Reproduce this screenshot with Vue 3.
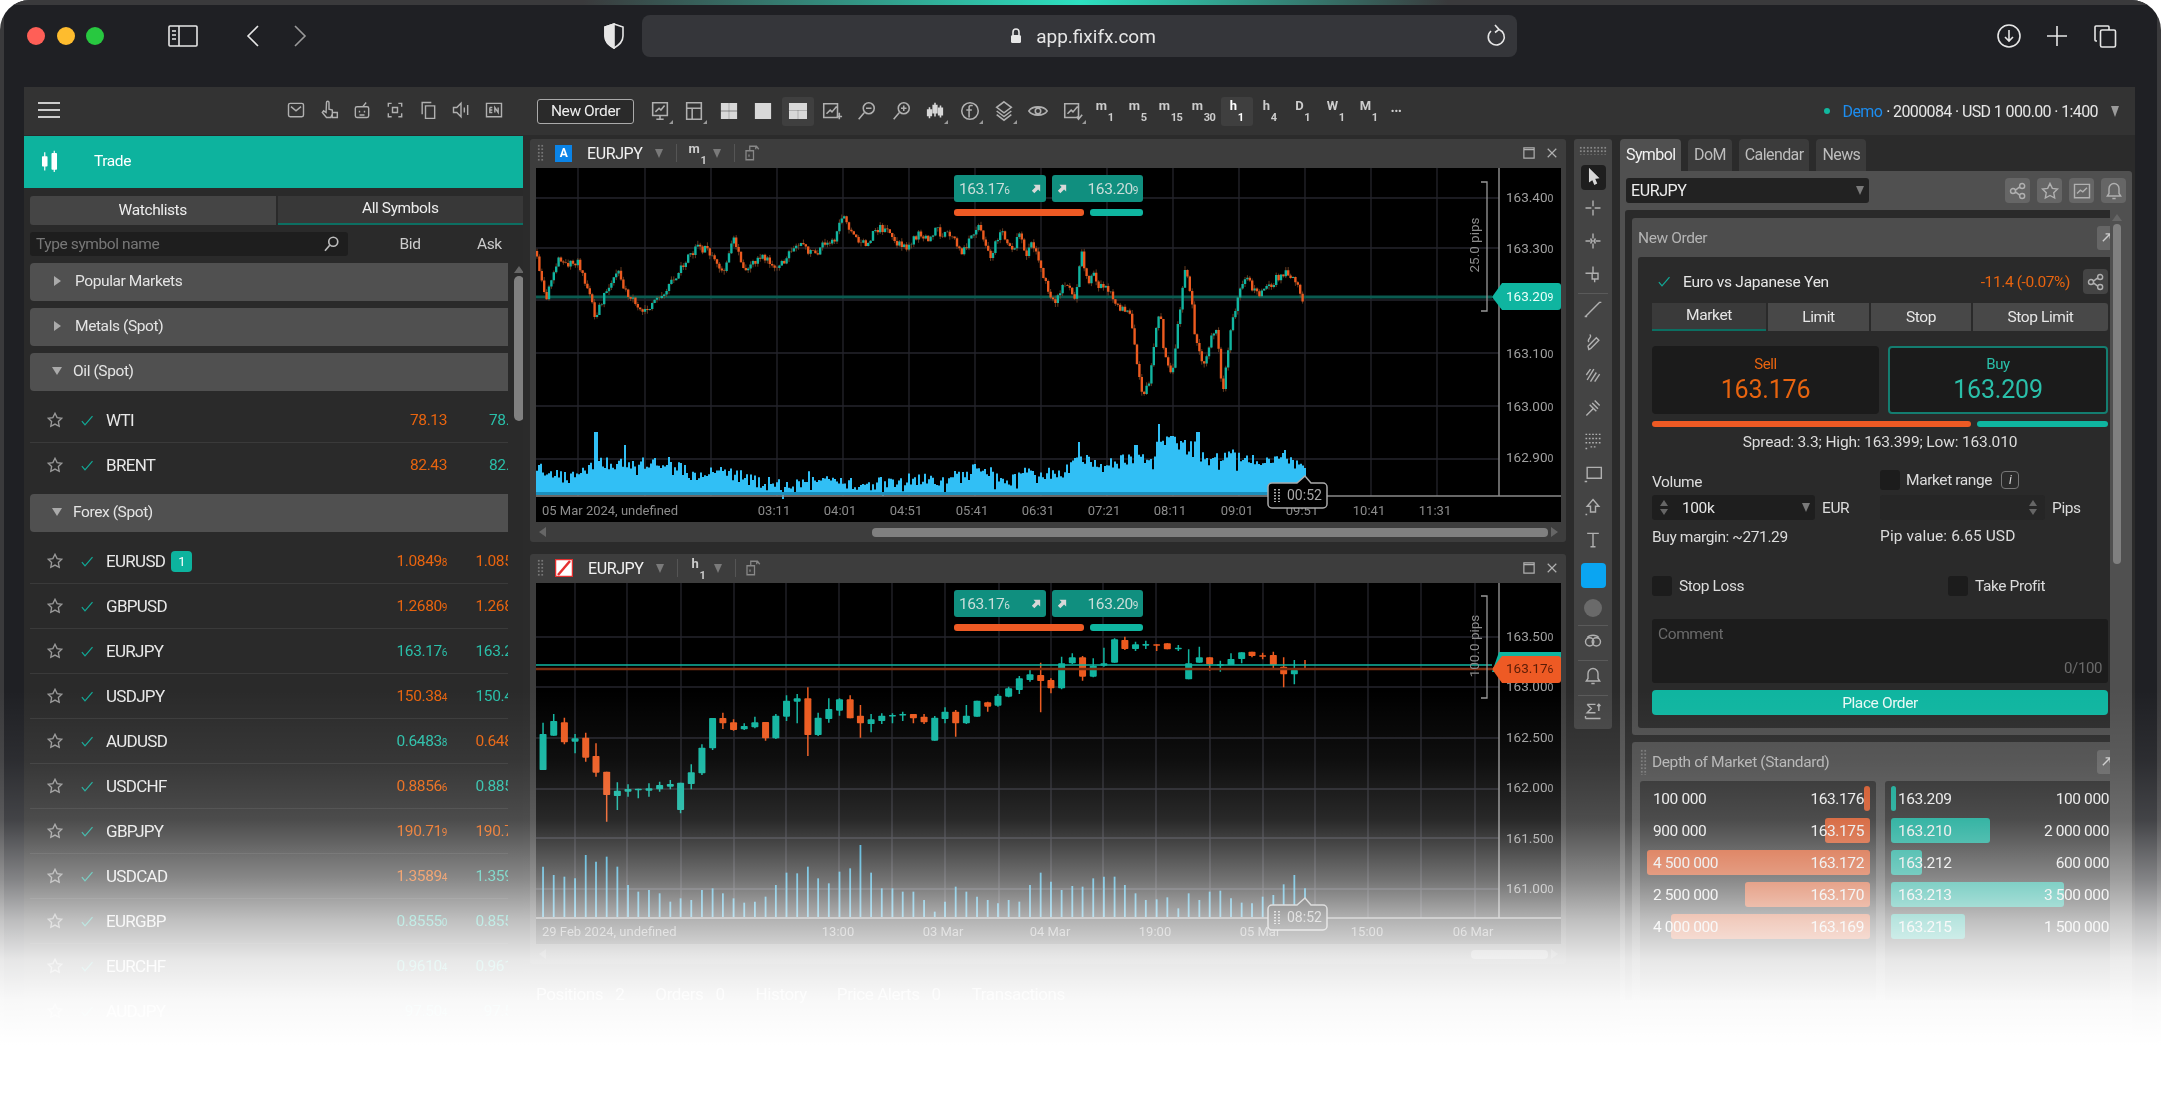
<script setup>
const icons = {
  mail: 'M5 4h14a2 2 0 0 1 2 2v12a2 2 0 0 1-2 2H5a2 2 0 0 1-2-2V6a2 2 0 0 1 2-2zM6 8l6 5 6-5',
  hand: 'M9 3a1.5 1.5 0 0 1 3 0v8l4 1v5l-2 4H9l-5-6 1.500-2 3 2zM16 15h6v6h-6z',
  robot: 'M6 8h12a2 2 0 0 1 2 2v9a2 2 0 0 1-2 2H6a2 2 0 0 1-2-2v-9a2 2 0 0 1 2-2zM9 13v2M15 13v2M9 18h6M13 8l4-5',
  focus: 'M4 8V4h4M16 4h4v4M20 16v4h-4M8 20H4v-4M9 9h6v6H9z',
  copy: 'M9 7h11v15H9zM5 17V3h11',
  sound: 'M3 9h4l5-5v16l-5-5H3zM16 9v6M20 6v12',
  lang: 'M3 4h18v16H3zM7 9v6h3M7 12h3M7 9h3M13 15V9l4 6V9',
  monitor: 'M4 3h16v14H4zM12 17v4M8 21h8M7 13l4-4 2 2 4-5',
  layout: 'M4 3h16v18H4zM4 9h16M10 9v12',
  grid: 'M4 4h7v7H4zM13 4h7v7h-7zM4 13h7v7H4zM13 13h7v7h-7z',
  square: 'M4 4h16v16H4z',
  split: 'M3 4h18v6H3zM3 12h8v8H3zM13 12h8v8h-8z',
  chartplus: 'M3 4h15v15H3zM6 15l4-4 2 2 5-6M20 14v7M17 18h6',
  zoomout: 'M15 3a6 6 0 1 0 0 12 6 6 0 0 0 0-12zM10 14l-6 7M12 9h6',
  zoomin: 'M15 3a6 6 0 1 0 0 12 6 6 0 0 0 0-12zM10 14l-6 7M12 9h6M15 6v6',
  candles: 'M6 8v12M4 11h4v6H4zM12 3v15M10 6h4v8h-4zM18 6v13M16 9h4v7h-4z',
  fcircle: 'M12 3a9 9 0 1 0 0 18 9 9 0 0 0 0-18zM15 6h-2a2 2 0 0 0-2 2v11M8 11h6',
  layers: 'M12 2l8 6-8 6-8-6zM4 12l8 6 8-6M4 16l8 6 8-6',
  eye: 'M2 12c4-6 16-6 20 0-4 6-16 6-20 0zM12 9a3 3 0 1 0 0 6 3 3 0 0 0 0-6z',
  chartcheck: 'M3 4h15v15H3zM6 15l4-4 2 2 5-6M16 18l2 3 4-5',
  cursor: 'M8 3l10 10-4.500.5 2.500 6-2 1-2.500-6L8 17z',
  cross: 'M12 3v7M12 14v7M3 12h7M14 12h7',
  crossb: 'M12 3v6M12 15v6M3 12h6M15 12h6M9 9l2 3-2 3M15 9l-2 3 2 3',
  crossq: 'M12 3v8M3 11h8M11 11h7v7h-7zM14 18v4',
  line: 'M3 21L20 4M2 21h3M19 4h3',
  scribble: 'M8 3c4 3-4 6-1 9M9 20l10-10-3-3L6 17l1 4z',
  hatch: 'M5 18L13 5M9 20l7-11M14 20l6-9M4 12l5-7',
  fork: 'M4 21l8-8M8 8l8 8M11 6l7 7M14 3l6 6',
  dots: 'M3 4h18M3 9h18M3 14h18M9 19h8M3 21h3',
  rect: 'M5 4h17v13H5zM2 21h3',
  arrowup: 'M12 3l7 8h-4v7H9v-7H5zM3 21h2',
  text: 'M5 4h14M12 4v16M9 20h6',
  glasses: 'M3 13a5 5 0 1 0 10 0 5 5 0 0 0-10 0zM11 13a5 5 0 1 0 10 0 5 5 0 0 0-10 0zM5 8c3-4 11-4 14 0',
  bell: 'M12 3a6 6 0 0 0-6 6v6l-2 3h16l-2-3V9a6 6 0 0 0-6-6zM10 21h4',
  bars: 'M5 4h10M5 4l5 5-5 5h10M3 21h18M3 21v-3M19 4v8M17 6l2-2 2 2',
  share: 'M17 3a3 3 0 1 0 0 6 3 3 0 0 0 0-6zM6 9a3 3 0 1 0 0 6 3 3 0 0 0 0-6zM17 15a3 3 0 1 0 0 6 3 3 0 0 0 0-6zM9 11l5-4M9 13l5 4',
  star: 'M12 3l2.800 5.800 6.200.9-4.500 4.400 1.100 6.300L12 17.400l-5.600 3 1.100-6.300L3 9.700l6.200-.9z',
  chartbox: 'M3 4h18v16H3zM6 15l4-4 3 2 5-5',
  check: 'M3 13l5 6L20 5',
  popout: 'M4 9h10v12H4zM9 9V3h8v4M13 3l5 0 3 4M8 14v3',
  magnifier: 'M15 3a6 6 0 1 0 0 12 6 6 0 0 0 0-12zM10 14l-6 7',
}

const headIcons = ['mail', 'hand', 'robot', 'focus', 'copy', 'sound', 'lang']
const topIcons = [
  { name: 'monitor', mark: true }, { name: 'layout', mark: true }, { name: 'grid', fill: true }, { name: 'square', fill: true },
  { name: 'split', fill: true, on: true }, { name: 'chartplus' }, { name: 'zoomout' }, { name: 'zoomin' },
  { name: 'candles', fill: true, mark: true }, { name: 'fcircle', mark: true }, { name: 'layers', mark: true }, { name: 'eye' }, { name: 'chartcheck', mark: true },
]
const timeframes = [
  ['m', '1'], ['m', '5'], ['m', '15'], ['m', '30'], ['h', '1', true], ['h', '4'], ['D', '1'], ['W', '1'], ['M', '1'],
]
const tools = [
  { i: 'cursor', on: true }, { i: 'cross' }, { i: 'crossb' }, { i: 'crossq' }, { sep: true },
  { i: 'line' }, { i: 'scribble' }, { i: 'hatch' }, { i: 'fork' }, { i: 'dots' }, { i: 'rect' }, { i: 'arrowup' }, { i: 'text' },
  { swatch: true }, { dot: true }, { sep: true }, { i: 'glasses' }, { sep: true }, { i: 'bell' }, { sep: true }, { i: 'bars' },
]

const split = (v) => ({ main: v.slice(0, -1), last: v.slice(-1) })
const groups = [
  { name: 'Popular Markets' },
  { name: 'Metals (Spot)' },
  {
    name: 'Oil (Spot)', open: true, rows: [
      { s: 'WTI', bid: '78.13', ask: '78.16', bc: 'dn', ac: 'up', plain: true },
      { s: 'BRENT', bid: '82.43', ask: '82.46', bc: 'dn', ac: 'up', plain: true },
    ],
  },
  {
    name: 'Forex (Spot)', open: true, rows: [
      { s: 'EURUSD', bid: '1.08498', ask: '1.08512', bc: 'dn', ac: 'dn', badge: '1' },
      { s: 'GBPUSD', bid: '1.26809', ask: '1.26824', bc: 'dn', ac: 'dn' },
      { s: 'EURJPY', bid: '163.176', ask: '163.209', bc: 'up', ac: 'up' },
      { s: 'USDJPY', bid: '150.384', ask: '150.412', bc: 'dn', ac: 'up' },
      { s: 'AUDUSD', bid: '0.64838', ask: '0.64852', bc: 'up', ac: 'dn' },
      { s: 'USDCHF', bid: '0.88566', ask: '0.88584', bc: 'dn', ac: 'up' },
      { s: 'GBPJPY', bid: '190.719', ask: '190.761', bc: 'dn', ac: 'dn' },
      { s: 'USDCAD', bid: '1.35894', ask: '1.35917', bc: 'dn', ac: 'up' },
      { s: 'EURGBP', bid: '0.85550', ask: '0.85566', bc: 'up', ac: 'up' },
      { s: 'EURCHF', bid: '0.96104', ask: '0.96128', bc: 'up', ac: 'up' },
      { s: 'AUDJPY', bid: '97.504', ask: '97.533', bc: 'up', ac: 'up' },
    ],
  },
]

const bidRows = [
  { v: '100 000', p: '163.176', w: 6 }, { v: '900 000', p: '163.175', w: 45 },
  { v: '4 500 000', p: '163.172', w: 223 }, { v: '2 500 000', p: '163.170', w: 125 },
  { v: '4 000 000', p: '163.169', w: 199 },
]
const askRows = [
  { v: '100 000', p: '163.209', w: 5 }, { v: '2 000 000', p: '163.210', w: 99 },
  { v: '600 000', p: '163.212', w: 31 }, { v: '3 500 000', p: '163.213', w: 173 },
  { v: '1 500 000', p: '163.215', w: 74 },
]

// chart data, in page pixels; the svg viewBox uses the same numbers
const random = (seed) => () => {
  seed = (seed + 0x6d2b79f5) | 0
  let t = Math.imul(seed ^ (seed >>> 15), 1 | seed)
  t = (t + Math.imul(t ^ (t >>> 7), 61 | t)) ^ t
  return ((t ^ (t >>> 14)) >>> 0) / 4294967296
}
const interp = (pts, x) => {
  for (let i = 1; i < pts.length; i++) {
    if (x <= pts[i][0]) {
      const k = (x - pts[i - 1][0]) / (pts[i][0] - pts[i - 1][0] || 1)
      return pts[i - 1][1] + (pts[i][1] - pts[i - 1][1]) * k
    }
  }
  return pts[pts.length - 1][1]
}
const left = (list) => list.map(([x, y]) => [530 + x / 2.53, 130 + y / 3])
const right = (list) => list.map(([x, y]) => [1150 + x / 3, 130 + y / 3])

const pricePts = [
  ...left([[18, 380], [40, 510], [75, 385], [125, 400], [165, 560], [220, 420], [290, 560], [370, 460], [430, 320], [490, 450],
    [515, 345], [540, 425], [590, 385], [620, 440], [690, 350], [720, 375], [795, 280], [850, 340], [885, 300], [945, 370],
    [1030, 285], [1090, 360], [1135, 300], [1165, 390], [1190, 300], [1220, 360], [1235, 320], [1255, 400], [1270, 350],
    [1330, 520], [1360, 470], [1380, 510], [1395, 380], [1410, 460], [1425, 420], [1490, 520], [1515, 530], [1550, 810]]),
  ...right([[0, 770], [30, 540], [40, 650], [65, 740], [105, 410], [125, 480], [135, 610], [160, 680], [190, 590], [200, 600],
    [218, 770], [245, 570], [285, 440], [330, 500], [380, 440], [410, 420], [440, 480], [465, 560]]),
]
const volPts = [
  ...left([[0, 1010], [100, 1040], [165, 1000], [230, 1000], [350, 1000], [420, 1040], [480, 1020], [560, 1050], [660, 1075],
    [700, 1040], [840, 1070], [960, 1045], [1050, 1055], [1130, 1010], [1210, 1060], [1260, 1010], [1340, 1040], [1390, 985],
    [1450, 1010], [1530, 980]]),
  ...right([[0, 1000], [25, 930], [80, 940], [130, 950], [170, 1000], [220, 970], [300, 990], [400, 975], [465, 1030]]),
]

const buildTicks = () => {
  const rnd = random(11)
  let up = ''
  let down = ''
  let wick = ''
  let prev = interp(pricePts, 536)
  let wobble = 0
  let target = 0
  for (let i = 0, x = 537; x < 1305; x += 2.4, i++) {
    // a short swing every few ticks, so the line is jagged and not smooth
    if (i % 5 === 0) target = (rnd() - 0.5) * 16
    wobble += (target - wobble) * 0.45
    const next = interp(pricePts, x) + wobble + (rnd() - 0.5) * 8
    const hi = Math.min(prev, next) - rnd() * 4
    const lo = Math.max(prev, next) + rnd() * 4
    wick += `M${x.toFixed(1)} ${hi.toFixed(1)}V${lo.toFixed(1)}`
    const body = `M${x.toFixed(1)} ${prev.toFixed(1)}V${next.toFixed(1)}`
    if (next < prev) up += body
    else down += body
    prev = next
  }
  return { up, down, wick }
}
const buildVolume = () => {
  const rnd = random(5)
  const spikes = { 595: 432, 624: 445, 1078: 442, 1158: 424, 1197: 432, 1135: 445 }
  let d = 'M536 495'
  for (let x = 536; x < 1305; x += 2) {
    let y = interp(volPts, x) + (rnd() - 0.5) * 13
    if (rnd() > 0.9) y += 8
    for (const s in spikes) if (Math.abs(x - s) < 1.5) y = spikes[s]
    d += `V${y.toFixed(1)}h2`
  }
  return d + 'V495z'
}

const candleLeft = [
  [33, 552, 660, 518, 660, 1], [60, 513, 557, 492, 557, 1], [87, 517, 577, 503, 583, 0], [114, 565, 575, 552, 610, 1],
  [141, 563, 623, 548, 635, 0], [167, 618, 668, 580, 680, 0], [194, 665, 735, 665, 815, 0], [221, 722, 738, 697, 780, 1],
  [248, 717, 725, 703, 740, 1], [274, 716, 720, 716, 745, 1], [301, 715, 722, 700, 740, 1], [328, 705, 718, 695, 725, 1],
  [355, 702, 710, 690, 718, 1], [381, 698, 780, 698, 790, 1], [408, 667, 702, 643, 718, 1], [435, 593, 670, 583, 675, 1],
  [462, 504, 595, 504, 600, 1], [488, 504, 520, 488, 537, 0], [515, 517, 540, 508, 542, 0], [542, 528, 538, 520, 540, 1],
  [569, 517, 532, 500, 535, 1], [596, 516, 565, 516, 572, 0], [622, 497, 565, 492, 567, 1], [649, 452, 500, 436, 513, 1],
  [676, 445, 455, 432, 520, 1], [703, 445, 555, 412, 618, 0], [729, 503, 555, 488, 558, 1], [756, 477, 507, 445, 518, 1],
  [783, 448, 482, 445, 497, 1], [810, 448, 505, 436, 505, 0], [836, 497, 520, 465, 563, 0], [863, 508, 522, 492, 547, 1],
  [890, 497, 513, 490, 522, 1], [917, 495, 498, 490, 520, 1], [943, 492, 495, 485, 513, 1], [970, 492, 505, 492, 520, 0],
  [997, 500, 517, 492, 522, 0], [1024, 503, 572, 498, 572, 1], [1050, 485, 507, 472, 520, 1], [1077, 485, 520, 480, 560, 0],
  [1104, 497, 520, 465, 522, 1], [1131, 452, 500, 452, 500, 1], [1158, 457, 470, 455, 485, 0], [1184, 437, 467, 432, 470, 1],
  [1211, 415, 440, 410, 442, 1], [1238, 385, 420, 378, 432, 1], [1265, 373, 390, 360, 395, 1], [1292, 375, 393, 338, 487, 0],
  [1318, 390, 415, 385, 430, 0], [1345, 340, 415, 320, 418, 1], [1372, 322, 340, 310, 342, 1], [1398, 322, 380, 318, 392, 0],
  [1425, 347, 380, 325, 382, 1], [1452, 340, 347, 293, 350, 1], [1479, 268, 338, 265, 338, 1], [1505, 270, 297, 260, 300, 0],
  [1532, 283, 297, 275, 303, 1], [1558, 282, 287, 272, 297, 1],
]
const candleRight = [
  [20, 283, 285, 283, 303, 0], [52, 280, 298, 280, 298, 0], [85, 293, 297, 285, 303, 1], [116, 340, 388, 298, 388, 1],
  [148, 322, 338, 290, 338, 1], [179, 322, 343, 322, 362, 0], [211, 343, 347, 332, 365, 1], [243, 327, 345, 310, 345, 1],
  [275, 307, 327, 307, 340, 1], [306, 305, 318, 305, 322, 0], [338, 316, 319, 308, 328, 0], [370, 315, 345, 305, 360, 0],
  [401, 350, 373, 322, 412, 0], [433, 360, 373, 330, 403, 1], [465, 354, 358, 330, 358, 0],
]
const barTops = [
  950, 975, 980, 985, 915, 935, 920, 950, 1005, 1025, 1020, 1030, 1055, 1045, 1050, 1020, 1015, 1030, 1045, 1058, 1055, 1040,
  1005, 968, 970, 950, 985, 1000, 965, 955, 885, 968, 1015, 1015, 1025, 1025, 1050, 1085, 1055, 1010, 1025, 1040, 1050, 1060,
  1050, 1055, 1005, 968, 995, 1020, 1008, 1010, 985, 980, 980, 1005, 1030, 1050,
  1048, 1042, 1075, 1030, 1050, 1025, 1022, 1045, 1058, 1060, 1040, 1035, 1003, 975, 1015,
]
const toCandle = (x0, sx) => ([x, t, b, wt, wb, up]) => ({
  x: x0 + x / sx, y: 550 + t / 3, h: Math.max((b - t) / 3, 1.5), wt: 550 + wt / 3, wb: 550 + wb / 3, up,
})
const candles = [...candleLeft.map(toCandle(530, 2.53)), ...candleRight.map(toCandle(1150, 3))]
const volBars = candles.map((c, i) => ({ x: c.x, y: 550 + barTops[i] / 3 }))

const ticks = buildTicks()
const volumeArea = buildVolume()

const charts = [
  {
    id: 'a', view: '536 168 1025 354', h: 354, badge: 'A', tf: 'm',
    gridX: [578, 645, 711, 777, 843, 909, 975, 1041, 1107, 1173, 1239, 1305, 1371, 1437],
    gridY: [198, 248, 300, 353, 406, 459],
    axisY: 496, labelY: 515, bottom: 522,
    prices: [['163.40', '0', 202], ['163.30', '0', 253], ['163.10', '0', 358], ['163.00', '0', 411], ['162.90', '0', 462]],
    times: [['03:11', 774], ['04:01', 840], ['04:51', 906], ['05:41', 972], ['06:31', 1038], ['07:21', 1104], ['08:11', 1170], ['09:01', 1237], ['09:51', 1302], ['10:41', 1369], ['11:31', 1435]],
    date: '05 Mar 2024, undefined',
    pips: { text: '25.0 pips', y: 245, top: 182, bot: 311 },
    tipY: 483, tipText: '00:52', thumb: 676, thumbLeft: 326,
  },
  {
    id: 'b', view: '536 583 1025 361', h: 361, badge: 'line', tf: 'h',
    gridX: [575, 627, 681, 734, 786, 839, 892, 945, 999, 1051, 1103, 1156, 1210, 1263, 1315, 1368, 1421, 1475],
    gridY: [637, 687, 738, 789, 838, 889],
    axisY: 918, labelY: 936, bottom: 944,
    prices: [['163.50', '0', 641], ['163.00', '0', 691], ['162.50', '0', 742], ['162.00', '0', 792], ['161.50', '0', 843], ['161.00', '0', 893]],
    times: [['13:00', 838], ['03 Mar', 943], ['04 Mar', 1050], ['19:00', 1155], ['05 Mar', 1260], ['15:00', 1367], ['06 Mar', 1473]],
    date: '29 Feb 2024, undefined',
    pips: { text: '100.0 pips', y: 646, top: 596, bot: 698 },
    tipY: 905, tipText: '08:52', thumb: 77, thumbLeft: 925,
  },
]
</script>

<template>
  <div class="page">
    <div class="window">
      <div class="chrome">
        <span class="light red"></span>
        <span class="light amber"></span>
        <span class="light green"></span>
        <svg class="sidebar-ico" viewBox="0 0 30 24"><path d="M2 2h26a1 1 0 0 1 1 1v18a1 1 0 0 1-1 1H2a1 1 0 0 1-1-1V3a1 1 0 0 1 1-1zM11 2v20M4 7h4M4 11h4M4 15h4" /></svg>
        <svg class="nav-ico" viewBox="0 0 14 24"><path d="M12 2L2 12l10 10" /></svg>
        <svg class="nav-ico next" viewBox="0 0 14 24"><path d="M2 2l10 10L2 22" /></svg>
        <svg class="shield" viewBox="0 0 22 26">
          <path class="shield-half" d="M11 1L2 4v9c0 6 4 9 9 12z" />
          <path d="M11 1l9 3v9c0 6-4 9-9 12-5-3-9-6-9-12V4z" />
        </svg>
        <div class="url">
          <svg class="lock" viewBox="0 0 12 16"><path d="M3 7V4a3 3 0 0 1 6 0v3" class="lock-bow" /><rect x="1" y="7" width="10" height="8" rx="1.500" /></svg>
          <span>app.fixifx.com</span>
          <svg class="reload" viewBox="0 0 20 24"><path d="M13 5.500A8 8 0 1 1 5 7M9 1l4 4.500-4 3" /></svg>
        </div>
        <svg class="round-ico" viewBox="0 0 24 24"><path d="M12 1a11 11 0 1 0 0 22 11 11 0 0 0 0-22zM12 6v11M8 13l4 4 4-4" /></svg>
        <svg class="round-ico plus" viewBox="0 0 24 24"><path d="M12 2v20M2 12h20" /></svg>
        <svg class="round-ico" viewBox="0 0 24 24"><path d="M4 17H3a1 1 0 0 1-1-1V3a1 1 0 0 1 1-1h12a1 1 0 0 1 1 1v3M9 6h12a1.500 1.500 0 0 1 1.500 1.500v14a1.500 1.500 0 0 1-1.500 1.500H9a1.500 1.500 0 0 1-1.500-1.500v-14A1.500 1.500 0 0 1 9 6z" /></svg>
      </div>

      <div class="app">
        <aside class="side">
          <div class="side-head">
            <div class="burger"><i></i><i></i><i></i></div>
            <div class="side-icons">
              <svg v-for="n in headIcons" :key="n" class="ico" viewBox="0 0 24 24"><path :d="icons[n]" /></svg>
            </div>
          </div>
          <div class="trade">
            <svg class="trade-ico" viewBox="0 0 24 30">
              <path d="M6 4v23M18 2v27" class="trade-wick" />
              <rect x="2.500" y="9" width="7" height="13" rx="1" />
              <rect x="14.500" y="5" width="7" height="21" rx="1" />
            </svg>
            <span>Trade</span>
          </div>
          <div class="side-tabs">
            <div class="side-tab">Watchlists</div>
            <div class="side-tab on">All Symbols</div>
          </div>
          <div class="search-row">
            <div class="search">
              <span>Type symbol name</span>
              <svg viewBox="0 0 24 24"><path :d="icons.magnifier" /></svg>
            </div>
            <span class="col-bid">Bid</span>
            <span class="col-ask">Ask</span>
          </div>
          <div class="list-wrap">
            <div class="list">
              <template v-for="g in groups" :key="g.name">
                <div class="group">
                  <i :class="g.open ? 'tri-down' : 'tri-right'"></i>
                  <span>{{ g.name }}</span>
                </div>
                <div v-if="g.rows" class="rows">
                  <div v-for="r in g.rows" :key="r.s" class="row">
                    <div class="row-inner">
                      <svg class="star" viewBox="0 0 24 24"><path :d="icons.star" /></svg>
                      <svg class="tick" viewBox="0 0 24 24"><path :d="icons.check" /></svg>
                      <span class="sym">{{ r.s }}</span>
                      <span v-if="r.badge" class="count">{{ r.badge }}</span>
                      <span class="bid" :class="r.bc">
                        <template v-if="r.plain">{{ r.bid }}</template>
                        <template v-else>{{ split(r.bid).main }}<small>{{ split(r.bid).last }}</small></template>
                      </span>
                      <span class="ask" :class="r.ac">
                        <template v-if="r.plain">{{ r.ask }}</template>
                        <template v-else>{{ split(r.ask).main }}<small>{{ split(r.ask).last }}</small></template>
                      </span>
                    </div>
                  </div>
                </div>
              </template>
            </div>
            <div class="bar-track">
              <i class="arrow-up"></i>
              <div class="bar-thumb"></div>
            </div>
          </div>
        </aside>

        <div class="main">
          <div class="topbar">
            <button class="new-order">New Order</button>
            <div class="top-icons">
              <span v-for="t in topIcons" :key="t.name" class="top-ico" :class="{ on: t.on, mark: t.mark }">
                <svg class="ico" :class="{ solid: t.fill }" viewBox="0 0 24 24"><path :d="icons[t.name]" /></svg>
              </span>
            </div>
            <div class="tfs">
              <span v-for="t in timeframes" :key="t[0] + t[1]" class="tf" :class="{ on: t[2] }">
                <b>{{ t[0] }}</b><sub>{{ t[1] }}</sub>
              </span>
              <span class="more">•••</span>
            </div>
            <div class="account">
              <i class="online"></i>
              <span class="demo">Demo</span>
              <span>· 2000084 · USD 1 000.00 · 1:400</span>
              <i class="tri-down acc-tri"></i>
            </div>
          </div>

          <div class="work">
            <div class="charts">
              <section v-for="c in charts" :key="c.id" class="chart">
                <div class="chart-head">
                  <i class="grip"></i>
                  <span v-if="c.badge === 'A'" class="type-a">A</span>
                  <svg v-else class="type-line" viewBox="0 0 18 18"><rect width="18" height="18" fill="#fff" /><path d="M3 16L15 2" /></svg>
                  <span class="chart-sym">EURJPY</span>
                  <i class="tri-down small"></i>
                  <i class="vsep"></i>
                  <span class="tf head-tf"><b>{{ c.tf }}</b><sub>1</sub></span>
                  <i class="tri-down small"></i>
                  <i class="vsep"></i>
                  <svg class="ico head-pop" viewBox="0 0 24 24"><path :d="icons.popout" /></svg>
                  <div class="chart-win">
                    <svg class="win-ico" viewBox="0 0 14 14"><path d="M1 3h12v10H1zM1 3V1h12v2" /></svg>
                    <svg class="win-ico" viewBox="0 0 14 14"><path d="M2 2l10 10M12 2L2 12" /></svg>
                  </div>
                </div>
                <div class="canvas">
                  <svg class="plot" :viewBox="c.view" :style="{ height: c.h + 'px' }">
                    <path v-for="x in c.gridX" :key="'gx' + x" class="gridl" :d="`M${x} 160V${c.axisY}`" />
                    <path v-for="y in c.gridY" :key="'gy' + y" class="gridl" :d="`M536 ${y}H1499`" />

                    <g v-if="c.id === 'a'">
                      <path class="vol-area" :d="volumeArea" />
                      <path class="vol-base" d="M536 493.500H1290" />
                      <path class="last-line" d="M536 297H1492" />
                      <path class="tick-wick" :d="ticks.wick" />
                      <path class="tick-up" :d="ticks.up" />
                      <path class="tick-dn" :d="ticks.down" />
                    </g>
                    <g v-else>
                      <path v-for="b in volBars" :key="b.x" class="vol-bar" :d="`M${b.x} ${b.y}V917`" />
                      <g v-for="k in candles" :key="k.x">
                        <path :class="k.up ? 'wick-up' : 'wick-dn'" :d="`M${k.x} ${k.wt}V${k.wb}`" />
                        <rect :class="k.up ? 'body-up' : 'body-dn'" :x="k.x - 3.500" :y="k.y" width="7" :height="k.h" rx="0.800" />
                      </g>
                      <path class="ask-line" d="M536 665H1492" />
                      <path class="bid-line" d="M536 669H1492" />
                    </g>

                    <path class="axis" :d="`M1499 160V${c.axisY}`" />
                    <path class="axis" :d="`M536 ${c.axisY}H1561`" />
                    <text v-for="p in c.prices" :key="p[0]" class="price-lab" x="1506" :y="p[2]">{{ p[0] }}<tspan class="lab-small">{{ p[1] }}</tspan></text>
                    <text class="time-lab" x="542" :y="c.labelY">{{ c.date }}</text>
                    <text v-for="t in c.times" :key="t[0]" class="time-lab mid" :x="t[1]" :y="c.labelY">{{ t[0] }}</text>

                    <path class="bracket" :d="`M1481 ${c.pips.top}H1487V${c.pips.bot}H1481`" />
                    <text class="pips" :transform="`translate(1479 ${c.pips.y}) rotate(-90)`">{{ c.pips.text }}</text>

                    <g v-if="c.id === 'a'">
                      <path class="tag-up" d="M1502 283H1558a3 3 0 0 1 3 3V307a3 3 0 0 1-3 3H1502L1492 297z" />
                      <text class="tag-text" x="1506" y="301">163.20<tspan class="lab-small">9</tspan></text>
                    </g>
                    <g v-else>
                      <path class="tag-up" d="M1499 652H1561V672H1492z" />
                      <path class="tag-dn" d="M1502 656H1558a3 3 0 0 1 3 3V680a3 3 0 0 1-3 3H1502L1492 669z" />
                      <text class="tag-text dark" x="1506" y="673">163.17<tspan class="lab-small">6</tspan></text>
                    </g>

                    <path class="tip" :d="`M1272 ${c.tipY}H1297L1305 ${c.tipY - 7}L1311 ${c.tipY}H1323a4 4 0 0 1 4 4V${c.tipY + 21}a4 4 0 0 1-4 4H1272a4 4 0 0 1-4-4V${c.tipY + 4}a4 4 0 0 1 4-4z`" />
                    <path class="tip-grip" :d="`M1275 ${c.tipY + 6}V${c.tipY + 19}M1279 ${c.tipY + 6}V${c.tipY + 19}`" />
                    <text class="tip-text" x="1287" :y="c.tipY + 17">{{ c.tipText }}</text>
                  </svg>
                  <div class="quick">
                    <div class="quick-btn sell">
                      <span>163.17<small>6</small></span>
                      <svg viewBox="0 0 12 12"><path d="M3 1h8v8L8.500 6.500 4 11 1 8l4.500-4.500z" /></svg>
                    </div>
                    <div class="quick-btn buy">
                      <svg viewBox="0 0 12 12"><path d="M3 1h8v8L8.500 6.500 4 11 1 8l4.500-4.500z" /></svg>
                      <span>163.20<small>9</small></span>
                    </div>
                    <i class="quick-bar dn"></i>
                    <i class="quick-bar up"></i>
                  </div>
                </div>
                <div class="chart-scroll">
                  <i class="tri-left"></i>
                  <div class="scroll-thumb" :style="{ width: c.thumb + 'px', marginLeft: c.thumbLeft + 'px' }"></div>
                  <i class="tri-right dim"></i>
                </div>
              </section>
              <div class="bottom-tabs">
                <span>Positions</span><em>2</em>
                <span>Orders</span><em>0</em>
                <span>History</span>
                <span>Price Alerts</span><em>0</em>
                <span>Transactions</span>
              </div>
            </div>

            <div class="tools">
              <div class="tools-grip"></div>
              <template v-for="(t, i) in tools" :key="i">
                <div v-if="t.sep" class="tool-sep"></div>
                <div v-else class="tool">
                  <span v-if="t.swatch" class="swatch"></span>
                  <span v-else-if="t.dot" class="tool-dot"></span>
                  <span v-else :class="{ 'tool-on': t.on }">
                    <svg class="ico" :class="{ solid: t.on, dotted: t.i === 'dots' }" viewBox="0 0 24 24"><path :d="icons[t.i]" /></svg>
                  </span>
                </div>
              </template>
            </div>

            <div class="panel">
              <div class="panel-tabs">
                <span class="p-tab on">Symbol</span>
                <span class="p-tab">DoM</span>
                <span class="p-tab">Calendar</span>
                <span class="p-tab">News</span>
              </div>
              <div class="panel-body">
                <div class="select-row">
                  <div class="select"><span>EURJPY</span><i class="tri-down small"></i></div>
                  <div class="sym-btns">
                    <span v-for="n in ['share', 'star', 'chartbox', 'bell']" :key="n" class="sym-btn">
                      <svg class="ico" viewBox="0 0 24 24"><path :d="icons[n]" /></svg>
                    </span>
                  </div>
                </div>
                <div class="panel-scroll">
                  <div class="scroll-area">
                    <div class="card">
                      <div class="card-head">
                        <span class="card-title">New Order</span>
                        <span class="card-btn"><svg viewBox="0 0 12 12"><path d="M2 10L10 2M5 2h5v5" /></svg></span>
                      </div>
                      <div class="order">
                        <div class="euro-row">
                          <svg class="tick" viewBox="0 0 24 24"><path :d="icons.check" /></svg>
                          <span class="euro-name">Euro vs Japanese Yen</span>
                          <span class="euro-chg">-11.4 (-0.07%)</span>
                          <span class="sym-btn small">
                            <svg class="ico" viewBox="0 0 24 24"><path :d="icons.share" /></svg>
                          </span>
                        </div>
                        <div class="order-tabs">
                          <span class="o-tab on">Market</span>
                          <span class="o-tab limit">Limit</span>
                          <span class="o-tab stop">Stop</span>
                          <span class="o-tab sl">Stop Limit</span>
                        </div>
                        <div class="quote">
                          <div class="quote-box sell-box"><span>Sell</span><b>163.176</b></div>
                          <div class="quote-box buy-box"><span>Buy</span><b>163.209</b></div>
                        </div>
                        <div class="ratio"><i class="dn"></i><i class="up"></i></div>
                        <div class="spread">Spread: 3.3; High: 163.399; Low: 163.010</div>

                        <div class="form">
                          <div class="f-col">
                            <label class="vol-label">Volume</label>
                            <div class="vol-line">
                              <div class="input vol-input">
                                <span class="spin"><i class="tri-up-s"></i><i class="tri-down-s"></i></span>
                                <span class="vol-val">100k</span>
                                <i class="tri-down small"></i>
                              </div>
                              <span>EUR</span>
                            </div>
                            <div class="f-note">Buy margin: ~271.29</div>
                          </div>
                          <div class="f-col">
                            <div class="range-line">
                              <i class="box"></i>
                              <span>Market range</span>
                              <span class="info">i</span>
                            </div>
                            <div class="vol-line">
                              <div class="input pip-input">
                                <span class="spin"><i class="tri-up-s"></i><i class="tri-down-s"></i></span>
                              </div>
                              <span>Pips</span>
                            </div>
                            <div class="f-note pip">Pip value: 6.65 USD</div>
                          </div>
                        </div>

                        <div class="stops">
                          <div class="stop-item"><i class="box"></i><span>Stop Loss</span></div>
                          <div class="stop-item"><i class="box"></i><span>Take Profit</span></div>
                        </div>
                        <div class="comment">
                          <span>Comment</span>
                          <small>0/100</small>
                        </div>
                        <button class="place">Place Order</button>
                      </div>
                    </div>

                    <div class="card dom">
                      <div class="card-head">
                        <i class="grip"></i>
                        <span class="card-title">Depth of Market (Standard)</span>
                        <span class="card-btn"><svg viewBox="0 0 12 12"><path d="M2 10L10 2M5 2h5v5" /></svg></span>
                      </div>
                      <div class="dom-grid">
                        <div class="dom-side">
                          <div v-for="r in bidRows" :key="r.p" class="dom-row">
                            <i class="dom-bar bid-bar" :style="{ width: r.w + 'px' }"></i>
                            <span>{{ r.v }}</span>
                            <span>{{ r.p }}</span>
                          </div>
                        </div>
                        <div class="dom-side ask-side">
                          <div v-for="r in askRows" :key="r.p" class="dom-row">
                            <i class="dom-bar ask-bar" :style="{ width: r.w + 'px' }"></i>
                            <span>{{ r.p }}</span>
                            <span>{{ r.v }}</span>
                          </div>
                        </div>
                      </div>
                    </div>
                  </div>
                  <div class="bar-track panel-track">
                    <i class="arrow-up"></i>
                    <div class="bar-thumb"></div>
                  </div>
                </div>
              </div>
            </div>
          </div>
        </div>
      </div>
    </div>
    <div class="fade"></div>
  </div>
</template>

<style>
html,
body {
  margin: 0;
  background: #fff;
}
</style>

<style scoped>
.page {
  position: relative;
  width: 2161px;
  height: 1097px;
  overflow: hidden;
  background: #fff;
  font-family: Roboto, "Liberation Sans", sans-serif;
  font-size: 15.500px;
  letter-spacing: -0.4px;
  color: #ddd;
}
.window {
  height: 1097px;
  box-sizing: border-box;
  border-radius: 30px 30px 0 0;
  background: linear-gradient(90deg, #3a3a3c 0 4px, #1f2024 4px calc(100% - 4px), #3a3a3c calc(100% - 4px));
  position: relative;
  overflow: hidden;
  filter: blur(0.4px);
}
.window::before {
  content: "";
  position: absolute;
  left: 0;
  right: 0;
  top: 0;
  height: 5px;
  background: linear-gradient(90deg, #3a3a3c 27%, #2de0c0 50%, #3a3a3c 67%);
}
.fade {
  position: absolute;
  inset: 0;
  pointer-events: none;
  background: linear-gradient(
    180deg,
    rgba(255, 255, 255, 0) 690px,
    rgba(255, 255, 255, 0.06) 760px,
    rgba(255, 255, 255, 0.16) 820px,
    rgba(255, 255, 255, 0.45) 880px,
    rgba(255, 255, 255, 0.7) 920px,
    rgba(255, 255, 255, 0.89) 960px,
    rgba(255, 255, 255, 0.97) 1000px,
    #fff 1045px
  );
}

/* browser chrome */
.chrome {
  height: 87px;
  box-sizing: border-box;
  padding: 15px 40px 0 27px;
  display: flex;
  align-items: flex-start;
}
.light {
  width: 18px;
  height: 18px;
  border-radius: 50%;
  margin: 12px 11.500px 0 0;
}
.red { background: #ff5f57; }
.amber { background: #febc2e; }
.green { background: #28c840; }
.chrome svg {
  fill: none;
  stroke: #e6e6e6;
  stroke-width: 1.6;
}
.sidebar-ico {
  width: 30px;
  height: 24px;
  margin: 9px 0 0 52px;
}
.nav-ico {
  width: 14px;
  height: 24px;
  margin: 9px 0 0 48px;
}
.nav-ico.next {
  margin-left: 33px;
  stroke: #9a9a9a !important;
}
.shield {
  width: 22px;
  height: 26px;
  margin: 8px 0 0 296px;
}
.chrome .shield-half {
  fill: #e6e6e6;
}
.url {
  width: 875px;
  height: 42px;
  margin-left: 17px;
  padding-left: 8px;
  box-sizing: border-box;
  border-radius: 8px;
  background: #35363a;
  display: flex;
  align-items: center;
  justify-content: center;
  position: relative;
  font-size: 19px;
  letter-spacing: 0;
  color: #e6e6e6;
}
.lock {
  width: 12px;
  height: 16px;
  margin-right: 14px;
}
.chrome .lock rect {
  fill: #e6e6e6;
  stroke: none;
}
.reload {
  position: absolute;
  right: 11px;
  top: 9px;
  width: 20px;
  height: 24px;
}
.round-ico {
  width: 24px;
  height: 24px;
  margin: 9px 0 0 24px;
}
.url + .round-ico {
  margin-left: 480px;
}

/* shared bits */
.ico {
  width: 20px;
  height: 20px;
  fill: none;
  stroke: #b0b0b0;
  stroke-width: 1.7;
  flex: none;
}
.ico.solid {
  fill: #d8d8d8;
  stroke: #d8d8d8;
}
.ico.dotted {
  stroke-dasharray: 2 2;
}
.tri-right,
.tri-left,
.tri-down {
  display: inline-block;
  width: 0;
  height: 0;
  flex: none;
}
.tri-right {
  border-left: 7px solid #aaa;
  border-top: 5px solid transparent;
  border-bottom: 5px solid transparent;
}
.tri-right.dim,
.tri-left {
  border-left-color: #666;
}
.tri-left {
  border-left: 0;
  border-right: 7px solid #666;
  border-top: 5px solid transparent;
  border-bottom: 5px solid transparent;
}
.tri-down {
  border-top: 8px solid #aaa;
  border-left: 5px solid transparent;
  border-right: 5px solid transparent;
}
.tri-down.small {
  border-top-color: #7a7a7a;
  border-top-width: 9px;
  border-left-width: 4px;
  border-right-width: 4px;
}
.up { color: #2abfa9; }
.dn { color: #e8640f; }
.bar-track {
  width: 10px;
  display: flex;
  flex-direction: column;
  align-items: center;
}
.arrow-up {
  width: 0;
  height: 0;
  border-bottom: 7px solid #666;
  border-left: 5px solid transparent;
  border-right: 5px solid transparent;
}
.bar-thumb {
  width: 10px;
  height: 145px;
  margin-top: 3px;
  border-radius: 5px;
  background: #808080;
}
.grip {
  width: 7px;
  height: 18px;
  flex: none;
  background-image: radial-gradient(circle, #777 1px, transparent 1.2px);
  background-size: 3.500px 3.500px;
}

/* app */
.app {
  margin: 0 26px 0 24px;
  height: 1010px;
  display: flex;
  background: #2b2b2b;
  overflow: hidden;
}
.side {
  width: 499px;
  flex: none;
  background: #2a2a2a;
}
.side-head {
  height: 48px;
  box-sizing: border-box;
  background: #333;
  display: flex;
  align-items: center;
  padding: 0 19px 2px 14px;
  margin-bottom: 1px;
}
.burger {
  width: 22px;
}
.burger i {
  display: block;
  height: 2px;
  background: #ccc;
  margin: 5px 0;
}
.side-icons {
  margin-left: auto;
  display: flex;
  gap: 13px;
}
.trade {
  height: 52px;
  box-sizing: border-box;
  padding-bottom: 2px;
  background: #0db39e;
  display: flex;
  align-items: center;
  color: #fff;
}
.trade-ico {
  width: 19px;
  height: 24px;
  margin: 0 35px 0 16px;
  fill: #fff;
}
.trade-wick {
  stroke: #fff;
  stroke-width: 1.500;
}
.side-tabs {
  display: flex;
  margin: 8px 0 0 6px;
  gap: 2px;
}
.side-tab {
  flex: 1;
  height: 29px;
  line-height: 29px;
  text-align: center;
  background: #454545;
  color: #eee;
  border-radius: 3px 0 0 3px;
}
.side-tab.on {
  background: #383838;
  box-sizing: border-box;
  line-height: 25px;
  border-bottom: 2px solid #0c6f62;
  border-radius: 0;
}
.search-row {
  display: flex;
  align-items: center;
  margin: 7px 0 0 6px;
  height: 24px;
}
.search {
  width: 318px;
  height: 24px;
  box-sizing: border-box;
  padding: 0 8px 0 6px;
  background: #1e1e1e;
  border-radius: 3px;
  display: flex;
  align-items: center;
  justify-content: space-between;
  color: #777;
}
.search svg {
  width: 18px;
  height: 18px;
  fill: none;
  stroke: #bbb;
  stroke-width: 2.200;
}
.col-bid {
  width: 22px;
  margin-left: 51px;
  text-align: center;
  color: #ccc;
}
.col-ask {
  margin-left: 56px;
  color: #ccc;
}
.list-wrap {
  display: flex;
  margin: 7px 0 0 6px;
  gap: 6px;
}
.list {
  width: 478px;
  flex: none;
}
.bar-track {
  padding-top: 3px;
}
.group {
  height: 38px;
  box-sizing: border-box;
  margin-bottom: 7px;
  padding: 0 0 2px 24px;
  border-radius: 4px 0 0 4px;
  background: #505050;
  display: flex;
  align-items: center;
  color: #e4e4e4;
}
.group i {
  width: 0;
  margin-right: 14px;
}
.group .tri-down {
  margin-right: 11px;
  margin-left: -2px;
}
.rows {
  margin-bottom: -1px;
}
.rows:has(+ .group) {
  margin-bottom: 6px;
}
.row {
  height: 45px;
  box-sizing: border-box;
  border-bottom: 1px solid #3a3a3a;
  overflow: hidden;
}
.row:last-child {
  border-bottom: 0;
}
.row-inner {
  width: 496px;
  height: 44px;
  display: flex;
  align-items: center;
  padding-left: 16px;
  box-sizing: border-box;
}
.star {
  width: 18px;
  height: 18px;
  flex: none;
  fill: none;
  stroke: #999;
  stroke-width: 1.800;
}
.tick {
  width: 15px;
  height: 15px;
  flex: none;
  margin-left: 16px;
  fill: none;
  stroke: #11a896;
  stroke-width: 2;
}
.sym {
  margin-left: 11px;
  font-size: 17px;
  letter-spacing: -0.7px;
  color: #e8e8e8;
}
.count {
  width: 21px;
  height: 21px;
  margin-left: 6px;
  border-radius: 4px;
  background: #0db39e;
  color: #fff;
  font-size: 13px;
  text-align: center;
  line-height: 21px;
}
.bid,
.ask {
  font-size: 15.500px;
  letter-spacing: -0.4px;
  text-align: right;
}
.bid {
  margin-left: auto;
  width: 60px;
}
.ask {
  width: 79px;
  flex: none;
}
.bid small,
.ask small {
  font-size: 10px;
}

/* main */
.main {
  flex: 1;
  min-width: 0;
  background: #2b2b2b;
}
.topbar {
  height: 48px;
  background: #333;
  display: flex;
  align-items: center;
  padding-left: 14px;
  margin-bottom: 4px;
}
.new-order {
  width: 97px;
  height: 25px;
  box-sizing: border-box;
  margin: 0;
  padding: 0;
  border: 1.500px solid #aaa;
  border-radius: 3px;
  background: #2a2a2a;
  color: #eee;
  font: inherit;
  letter-spacing: inherit;
}
.top-icons {
  display: flex;
  margin-left: 10px;
  gap: 2.400px;
}
.top-ico {
  position: relative;
  width: 32px;
  height: 29px;
  display: flex;
  align-items: center;
  justify-content: center;
  border-radius: 3px;
}
.top-ico .ico {
  width: 22px;
  height: 22px;
}
.top-ico.on {
  background: #3f3f3f;
}
.top-ico.mark::after {
  content: "";
  position: absolute;
  right: 3px;
  bottom: 2px;
  border-bottom: 4px solid #999;
  border-left: 4px solid transparent;
}
.tfs {
  display: flex;
  gap: 1px;
  align-items: center;
}
.tf {
  width: 32px;
  height: 29px;
  display: inline-flex;
  justify-content: center;
  color: #ccc;
  border-radius: 3px;
  font-size: 13px;
  line-height: 14px;
}
.tf.on {
  background: #3f3f3f;
  color: #fff;
}
.tf b {
  font-weight: 700;
  padding-top: 2px;
}
.tf sub {
  font-size: 11px;
  font-weight: 700;
  line-height: 12px;
  padding-top: 15px;
  margin-left: 1px;
  vertical-align: baseline;
}
.more {
  margin-left: 5px;
  font-size: 11px;
  letter-spacing: 0;
  color: #ccc;
}
.account {
  margin-left: auto;
  margin-right: 16px;
  display: flex;
  align-items: center;
  gap: 4px;
  font-size: 16px;
  letter-spacing: -0.62px;
  color: #e6e6e6;
}
.online {
  width: 6px;
  height: 6px;
  margin-right: 9px;
  border-radius: 50%;
  background: #11b89f;
}
.demo {
  color: #1c8df0;
}
.acc-tri {
  margin-left: 9px;
  border-top-width: 11px;
  border-left-width: 4px;
  border-right-width: 4px;
  border-top-color: #9a9a9a;
}
.work {
  display: flex;
  padding-left: 7px;
  gap: 8px;
}
.charts {
  width: 1036px;
  flex: none;
}
.chart {
  margin-bottom: 12px;
  background: #3d3d3d;
  border-radius: 3px;
  padding: 0 5px 0 6px;
}
.chart-head {
  height: 29px;
  box-sizing: border-box;
  padding-bottom: 1px;
  display: flex;
  align-items: center;
}
.chart-head .grip {
  margin-right: 11px;
  margin-left: 1px;
}
.type-a {
  width: 17px;
  height: 17px;
  background: #0a84e8;
  color: #fff;
  font-size: 12px;
  font-weight: 700;
  text-align: center;
  line-height: 17px;
}
.type-line {
  width: 18px;
  height: 18px;
  stroke: #e53030;
  stroke-width: 2.500;
}
.chart-sym {
  margin: 0 13px 0 15px;
  font-size: 16px;
  letter-spacing: -0.4px;
  color: #f2f2f2;
}
.vsep {
  width: 1px;
  height: 18px;
  margin: 0 8px 0 13px;
  background: #555;
}
.head-tf {
  width: 24px;
  height: 26px;
  margin-right: 4px;
}
.head-pop {
  width: 18px;
  height: 18px;
  stroke: #888;
}
.chart-win {
  margin-left: auto;
  display: flex;
  gap: 11px;
  padding-right: 3px;
}
.win-ico {
  width: 12px;
  height: 12px;
  fill: none;
  stroke: #b0b0b0;
  stroke-width: 1.400;
}
.canvas {
  position: relative;
  background: #000;
  line-height: 0;
}
.plot {
  display: block;
  width: 1025px;
  font-family: Roboto, "Liberation Sans", sans-serif;
  letter-spacing: 0;
}
.gridl {
  stroke: #25252c;
  stroke-width: 1.300;
}
.axis {
  stroke: #8a8a8a;
  stroke-width: 1.500;
}
.price-lab {
  font-size: 13.500px;
  fill: #a0a0a0;
}
.lab-small {
  font-size: 10.500px;
}
.time-lab {
  font-size: 13px;
  fill: #8c8c8c;
}
.time-lab.mid {
  text-anchor: middle;
}
.bracket {
  fill: none;
  stroke: #999;
  stroke-width: 1.300;
}
.pips {
  font-size: 13.500px;
  fill: #8c8c8c;
  text-anchor: middle;
}
.vol-area {
  fill: #31bff5;
}
.vol-base {
  stroke: #1b8fbd;
  stroke-width: 3;
}
.last-line {
  stroke: #0a5b50;
  stroke-width: 3;
}
.tick-wick {
  fill: none;
  stroke: #7d4a28;
  stroke-width: 0.800;
}
.tick-up,
.tick-dn {
  fill: none;
  stroke-width: 2.400;
}
.tick-up {
  stroke: #11b4a0;
}
.tick-dn {
  stroke: #ec5a1f;
}
.vol-bar {
  stroke: #31bff5;
  stroke-width: 1.800;
  opacity: 0.85;
}
.wick-up {
  stroke: #11b4a0;
  stroke-width: 1.500;
}
.wick-dn {
  stroke: #ec5a1f;
  stroke-width: 1.500;
}
.body-up {
  fill: #11b4a0;
}
.body-dn {
  fill: #ec5a1f;
}
.ask-line {
  stroke: #11b4a0;
  stroke-width: 1.500;
}
.bid-line {
  stroke: #7a2e10;
  stroke-width: 2.500;
}
.tag-up {
  fill: #0fb5a0;
}
.tag-dn {
  fill: #ee5a24;
}
.tag-text {
  font-size: 13.500px;
  fill: #eafff9;
}
.tag-text.dark {
  fill: #5a1c06;
}
.tip {
  fill: #000;
  stroke: #aaa;
  stroke-width: 1.500;
}
.tip-grip {
  stroke: #aaa;
  stroke-width: 2;
  stroke-dasharray: 1.500 1.500;
}
.tip-text {
  font-size: 14px;
  fill: #a8a8a8;
}
.quick {
  position: absolute;
  top: 7px;
  left: 418px;
  width: 189px;
  display: grid;
  grid-template-columns: 92px 91px;
  column-gap: 6px;
  line-height: normal;
}
.quick-btn {
  height: 27px;
  box-sizing: border-box;
  padding: 0 5px;
  border-radius: 3px;
  background: #108f7f;
  color: #c9ddd9;
  font-size: 15.500px;
  display: flex;
  align-items: center;
  justify-content: space-between;
}
.quick-btn small {
  font-size: 10px;
}
.quick-btn svg {
  width: 10px;
  height: 10px;
  fill: #d8d8d8;
}
.quick-bar {
  height: 7px;
  margin-top: 7px;
  border-radius: 3px;
}
.quick-bar.dn {
  background: #ee5a24;
  margin-right: -38px;
}
.quick-bar.up {
  background: #0fb5a0;
  margin-left: 38px;
}
.chart-scroll {
  height: 20px;
  display: flex;
  align-items: center;
  padding-left: 3px;
  padding-right: 3px;
}
.scroll-thumb {
  height: 9px;
  border-radius: 4px;
  background: #808080;
}
.chart-scroll .tri-right {
  margin-left: auto;
}
.bottom-tabs {
  display: flex;
  align-items: center;
  height: 36px;
  padding-left: 6px;
  color: #ccc;
  font-size: 17px;
}
.bottom-tabs span {
  margin-right: 30px;
}
.bottom-tabs em {
  font-style: normal;
  margin: 0 31px 0 -18px;
}

/* drawing tools */
.tools {
  width: 38px;
  flex: none;
  height: 590px;
  background: #444;
  border-radius: 3px;
}
.tools-grip {
  height: 21.500px;
  margin: 0 5px;
  background-image: radial-gradient(circle, #888 0.900px, transparent 1.100px);
  background-size: 3.500px 3.500px;
  background-repeat: repeat;
  clip-path: inset(7px 0 6px 0);
}
.tool {
  height: 33px;
  display: flex;
  align-items: center;
  justify-content: center;
}
.tool-sep {
  height: 1px;
  margin: 0.500px 4px;
  background: #5a5a5a;
}
.tool-on {
  width: 25px;
  height: 25px;
  display: flex;
  align-items: center;
  justify-content: center;
  border-radius: 4px;
  background: #1e1e1e;
}
.swatch {
  width: 25px;
  height: 25px;
  border-radius: 4px;
  background: #0aa5f2;
}
.tool-dot {
  width: 18px;
  height: 18px;
  border-radius: 50%;
  background: #6a6a6a;
}

/* right panel */
.panel {
  width: 512px;
  flex: none;
}
.panel-tabs {
  height: 32px;
  display: flex;
  gap: 7px;
}
.p-tab {
  padding: 0 6px;
  height: 32px;
  line-height: 32px;
  background: #3b3b3b;
  color: #bdbdbd;
  font-size: 16px;
  letter-spacing: -0.6px;
  border-radius: 4px 4px 0 0;
}
.p-tab.on {
  width: 49px;
  background: #505050;
  color: #f2f2f2;
}
.panel-body {
  height: 860px;
  background: #505050;
  border-radius: 0 3px 3px 3px;
  padding-top: 7px;
}
.select-row {
  display: flex;
  padding: 0 6px;
  justify-content: space-between;
}
.select {
  width: 243px;
  height: 25px;
  box-sizing: border-box;
  padding: 0 5px 1px;
  background: #222;
  border-radius: 3px;
  display: flex;
  align-items: center;
  justify-content: space-between;
  font-size: 16px;
  color: #eee;
}
.sym-btns {
  display: flex;
  gap: 7px;
}
.sym-btn {
  width: 25px;
  height: 25px;
  border-radius: 4px;
  background: #666;
  display: flex;
  align-items: center;
  justify-content: center;
}
.sym-btn.small {
  background: #444;
  margin-left: 13px;
}
.panel-scroll {
  display: flex;
  margin: 7px 0 0 5px;
  gap: 2px;
}
.scroll-area {
  width: 485px;
  flex: none;
  height: 790px;
  overflow: hidden;
  background: #2a2a2a;
  padding: 8px 0 0 7px;
  box-sizing: border-box;
  border-radius: 3px 0 0 0;
}
.panel-track {
  width: 9px;
  padding-top: 4px;
}
.panel-track .bar-thumb {
  height: 340px;
  width: 8px;
}
.card {
  background: #4d4d4d;
  border-radius: 3px 0 0 3px;
  width: 500px;
  margin-bottom: 7px;
  padding-bottom: 7px;
}
.card-head {
  height: 39px;
  display: flex;
  align-items: center;
  padding-left: 6px;
  width: 478px;
  box-sizing: border-box;
  position: relative;
}
.card-title {
  color: #b4b4b4;
}
.card-btn {
  position: absolute;
  left: 465px;
  top: 8px;
  width: 20px;
  height: 24px;
  box-sizing: border-box;
  padding: 6px 0 0 4px;
  border-radius: 3px;
  background: #666;
}
.card-btn svg {
  display: block;
  width: 11px;
  height: 11px;
  fill: none;
  stroke: #ccc;
  stroke-width: 1.500;
}
.order {
  margin-left: 6px;
  height: 471px;
  box-sizing: border-box;
  background: #2a2a2a;
  padding: 12px 0 0 14px;
  border-radius: 3px 0 0 3px;
  width: 490px;
}
.euro-row {
  width: 456px;
  height: 25px;
  display: flex;
  align-items: center;
}
.euro-row .tick {
  margin-left: 5px;
}
.euro-name {
  margin-left: 11px;
  letter-spacing: -0.25px;
  color: #e6e6e6;
}
.euro-chg {
  margin-left: auto;
  color: #e8640f;
}
.order-tabs {
  width: 456px;
  display: flex;
  gap: 2px;
  margin-top: 9px;
}
.o-tab {
  height: 28px;
  line-height: 28px;
  text-align: center;
  background: #484848;
  color: #e6e6e6;
  border-radius: 0;
}
.o-tab.on {
  width: 114px;
  background: #3a3a3a;
  box-sizing: border-box;
  line-height: 25px;
  border-bottom: 2px solid #0c6f62;
}
.o-tab.limit { width: 101px; }
.o-tab.stop { width: 100px; }
.o-tab.sl { width: 135px; border-radius: 0 3px 3px 0; }
.quote {
  width: 456px;
  display: flex;
  gap: 9px;
  margin-top: 15px;
}
.quote-box {
  height: 68px;
  box-sizing: border-box;
  border-radius: 4px;
  background: #1b1b1b;
  display: flex;
  flex-direction: column;
  align-items: center;
  justify-content: center;
}
.sell-box {
  width: 227px;
  color: #e8640f;
}
.buy-box {
  width: 220px;
  color: #2abfa9;
  border: 2px solid #147d70;
}
.quote-box span {
  font-size: 15px;
  line-height: 20px;
}
.quote-box b {
  font-weight: 400;
  font-size: 25px;
  line-height: 32px;
  letter-spacing: -0.2px;
}
.ratio {
  width: 456px;
  display: flex;
  gap: 6px;
  margin-top: 7px;
}
.ratio i {
  height: 6px;
  border-radius: 3px;
}
.ratio .dn {
  width: 319px;
  background: #ee5a24;
}
.ratio .up {
  width: 131px;
  background: #0fb5a0;
}
.spread {
  width: 456px;
  margin-top: 6px;
  text-align: center;
  letter-spacing: -0.15px;
  color: #dcdcdc;
  line-height: 18px;
}
.form {
  display: flex;
  margin-top: 19px;
  color: #dcdcdc;
}
.f-col {
  width: 228px;
}
.vol-label {
  display: block;
  margin-top: 3px;
  line-height: 19px;
  margin-bottom: 3px;
}
.range-line {
  height: 20px;
  display: flex;
  align-items: center;
  margin-bottom: 5px;
}
.box {
  width: 20px;
  height: 20px;
  flex: none;
  display: block;
  background: #1c1c1c;
  border-radius: 3px;
}
.range-line span:first-of-type {
  margin-left: 6px;
}
.info {
  width: 18px;
  height: 18px;
  margin-left: 9px;
  box-sizing: border-box;
  border: 1px solid #777;
  border-radius: 4px;
  text-align: center;
  line-height: 16px;
  font-size: 12px;
  font-style: italic;
}
.vol-line {
  display: flex;
  align-items: center;
  gap: 7px;
}
.input {
  height: 25px;
  background: #1e1e1e;
  border-radius: 3px;
  display: flex;
  align-items: center;
  box-sizing: border-box;
  padding: 0 5px;
}
.vol-input {
  width: 163px;
}
.pip-input {
  width: 165px;
  background: #262626;
  justify-content: flex-end;
}
.spin {
  display: flex;
  flex-direction: column;
  gap: 3px;
  padding: 0 3px;
}
.tri-up-s,
.tri-down-s {
  width: 0;
  height: 0;
  border-left: 4.500px solid transparent;
  border-right: 4.500px solid transparent;
}
.tri-up-s { border-bottom: 6px solid #666; }
.tri-down-s { border-top: 6px solid #666; }
.vol-val {
  margin-left: 11px;
  color: #e6e6e6;
  flex: 1;
}
.f-note {
  margin-top: 8px;
  line-height: 18px;
}
.f-note.pip {
  margin-top: 7px;
  letter-spacing: 0.1px;
}
.stops {
  display: flex;
  margin-top: 30px;
  color: #dcdcdc;
}
.stop-item {
  width: 296px;
  display: flex;
  align-items: center;
  gap: 7px;
}
.stop-item:last-child {
  width: auto;
}
.comment {
  width: 456px;
  height: 64px;
  margin-top: 23px;
  box-sizing: border-box;
  padding: 6px;
  background: #1c1c1c;
  border-radius: 3px;
  display: flex;
  flex-direction: column;
  justify-content: space-between;
  color: #6a6a6a;
}
.comment small {
  align-self: flex-end;
  font-size: 15px;
}
.place {
  display: block;
  width: 456px;
  height: 25px;
  margin: 7px 0 0;
  padding: 0;
  border: 0;
  border-radius: 4px;
  background: #0fb5a0;
  color: #e8f8f5;
  font: inherit;
  letter-spacing: inherit;
}
.dom .card-head {
  padding-left: 8px;
}
.dom .grip {
  width: 7px;
  height: 26px;
  margin-right: 5px;
}
.dom-grid {
  display: flex;
  gap: 9px;
  margin-left: 8px;
  height: 240px;
}
.dom-side {
  width: 236px;
  box-sizing: border-box;
  padding: 2px 6px;
  background: #2a2a2a;
  border-radius: 3px;
}
.dom-row {
  position: relative;
  height: 32px;
  display: flex;
  align-items: center;
  justify-content: space-between;
  padding: 0 6px 0 7px;
  color: #e8e8e8;
}
.dom-row span {
  position: relative;
}
.ask-side .dom-row {
  padding: 0 0 0 7px;
  box-sizing: border-box;
  width: 218px;
}
.dom-bar {
  position: absolute;
  top: 3px;
  bottom: 4px;
  right: 0;
  border-radius: 3px;
}
.bid-bar {
  background: #ee5a24;
  opacity: 0.85;
}
.ask-bar {
  left: 0;
  right: auto;
  background: #0fb5a0;
  opacity: 0.9;
}
</style>
